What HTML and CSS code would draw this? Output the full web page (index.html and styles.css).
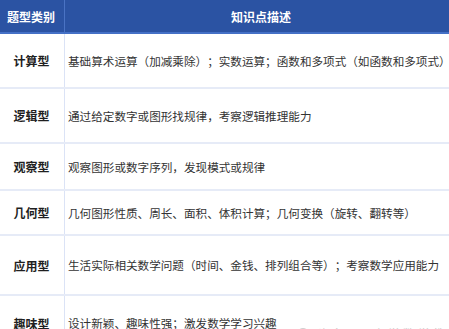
FILE: index.html
```html
<!DOCTYPE html>
<html lang="zh">
<head>
<meta charset="utf-8">
<link rel="stylesheet" href="styles.css">
</head>
<body>
<div class="frame">
  <div class="table">
    <div class="row head">
      <div class="c1">题型类别</div>
      <div class="c2">知识点描述</div>
    </div>
    <div class="row r1">
      <div class="c1">计算型</div>
      <div class="c2">基础算术运算（加减乘除）；实数运算；函数和多项式（如函数和多项式）</div>
    </div>
    <div class="row r2">
      <div class="c1">逻辑型</div>
      <div class="c2">通过给定数字或图形找规律，考察逻辑推理能力</div>
    </div>
    <div class="row r3">
      <div class="c1">观察型</div>
      <div class="c2">观察图形或数字序列，发现模式或规律</div>
    </div>
    <div class="row r4">
      <div class="c1">几何型</div>
      <div class="c2">几何图形性质、周长、面积、体积计算；几何变换（旋转、翻转等）</div>
    </div>
    <div class="row r5">
      <div class="c1">应用型</div>
      <div class="c2">生活实际相关数学问题（时间、金钱、排列组合等）；考察数学应用能力</div>
    </div>
    <div class="row r6">
      <div class="c1">趣味型</div>
      <div class="c2">设计新颖、趣味性强；激发数学学习兴趣</div>
    </div>
  </div>
  <div class="mark"><span class="dot"></span>头条 @ 小学数学教育</div>
</div>
</body>
</html>
```

FILE: styles.css
```css
html, body {
  margin: 0;
  padding: 0;
  background: #ffffff;
}
.frame {
  position: relative;
  width: 449px;
  height: 329px;
  overflow: hidden;
  font-family: "Noto Sans CJK SC", "Noto Sans", sans-serif;
  text-spacing-trim: space-all;
}
.table {
  width: 457px;
  display: flex;
  flex-direction: column;
}
.row {
  display: grid;
  grid-template-columns: 65px 1fr;
  border-bottom: 2px solid #e6ebf7;
  box-sizing: border-box;
}
.row .c1 {
  display: flex;
  align-items: center;
  justify-content: center;
  border-right: 1px solid #dbe3f6;
  font-weight: 700;
  font-size: 12px;
  color: #1f1f1f;
  padding-right: 1px;
}
.row .c2 {
  display: flex;
  align-items: center;
  padding-left: 3px;
  font-size: 11.6px;
  color: #333333;
  white-space: nowrap;
}
.head {
  height: 34px;
  background: #2b53a3;
  border-bottom: 2px solid #4470c6;
}
.head .c1 {
  color: #ffffff;
  border-right: 1px solid #4a73c4;
  padding-right: 2px;
  padding-top: 1px;
}
.head .c2 {
  color: #ffffff;
  font-weight: 700;
  font-size: 12px;
  justify-content: center;
  padding-left: 0;
  padding-top: 1px;
}
.r1 { height: 55px; }
.r2 { height: 55px; }
.r3 { height: 47px; }
.r4 { height: 45px; }
.r5 { height: 60px; }
.r6 { height: 56px; }
.mark {
  position: absolute;
  left: 297px;
  top: 325px;
  display: flex;
  align-items: center;
  gap: 8px;
  font-size: 12px;
  color: #c8c8c8;
  letter-spacing: 3px;
  white-space: nowrap;
}
.mark .dot {
  width: 12px;
  height: 12px;
  border-radius: 50%;
  background: #cfcfcf;
}
```
